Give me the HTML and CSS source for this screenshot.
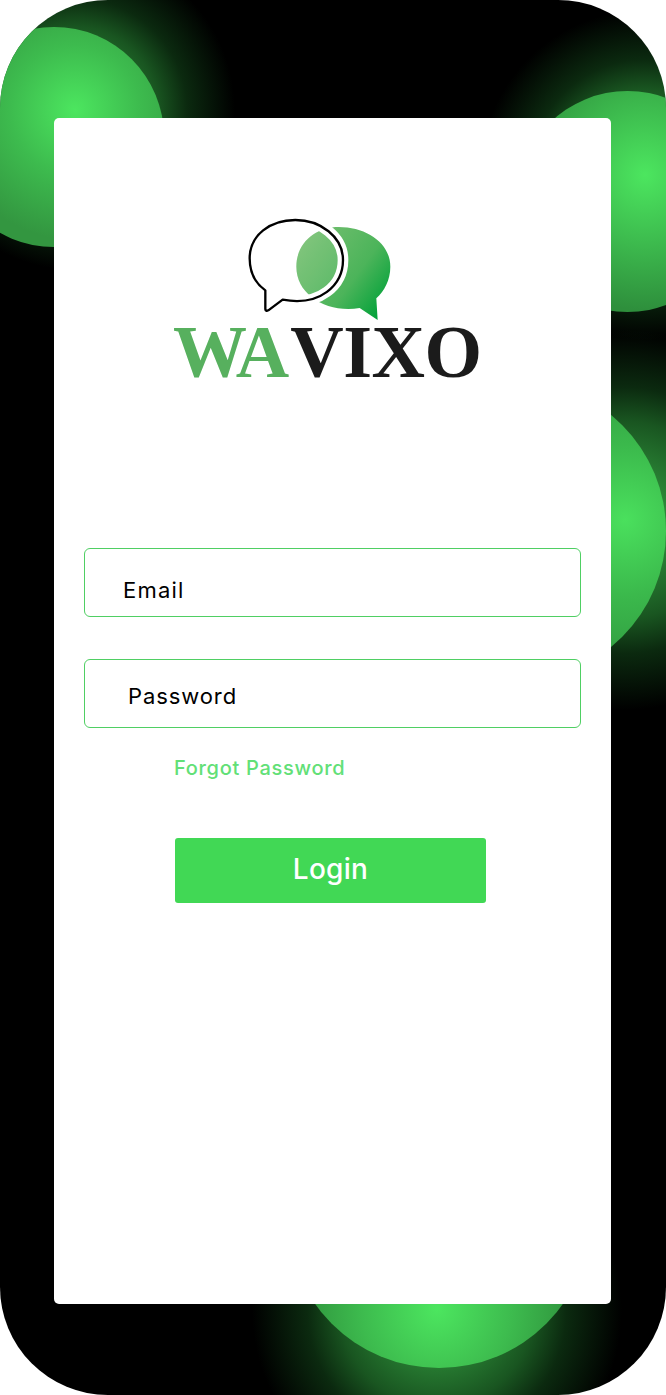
FILE: index.html
```html
<!DOCTYPE html>
<html lang="en">
<head>
<meta charset="utf-8">
<title>Wavixo Login</title>
<link rel="stylesheet" href="styles.css">
</head>
<body>
<main class="frame">
  <div class="orb orb-tl"></div>
  <div class="orb orb-tr"></div>
  <div class="orb orb-mr"></div>
  <div class="orb orb-b"></div>
  <section class="card">
    <svg class="logo-mark" viewBox="260 36 440 312" aria-hidden="true">
      <defs>
        <linearGradient id="bubble" x1="0.05" y1="0.2" x2="0.95" y2="0.85">
          <stop offset="0" stop-color="#74bf70"/>
          <stop offset="0.6" stop-color="#4cb45a"/>
          <stop offset="1" stop-color="#03a23a"/>
        </linearGradient>
        <clipPath id="inner">
          <path d="M367 284C480 305 548 240 548 165C548 95 480 45 405 45C330 45 268 90 268 160C268 200 285 235 315 256V312Q316 320 324 316Z"/>
        </clipPath>
      </defs>
      <path fill="url(#bubble)" d="M598 309C500 325 408 270 408 185C408 110 470 66 535 66C620 66 690 115 690 185C690 225 672 258 648 280L652 345Z"/>
      <path clip-path="url(#inner)" fill="#fff" fill-opacity="0.08" d="M598 309C500 325 408 270 408 185C408 110 470 66 535 66C620 66 690 115 690 185C690 225 672 258 648 280L652 345Z"/>
      <path fill="none" stroke="#fff" stroke-width="32" d="M367 284C480 305 548 240 548 165C548 95 480 45 405 45"/>
      <path fill="none" stroke="#000" stroke-width="7" stroke-linejoin="round" d="M367 284C480 305 548 240 548 165C548 95 480 45 405 45C330 45 268 90 268 160C268 200 285 235 315 256V312Q316 320 324 316Z"/>
    </svg>
    <h1 class="wordmark"><span class="wordmark-wa">WA</span><span class="wordmark-vixo">VIXO</span></h1>
    <form class="form">
      <input class="field field-email" type="text" placeholder="Email">
      <input class="field field-password" type="password" placeholder="Password">
      <a class="forgot" href="#">Forgot Password</a>
      <button class="login" type="button">Login</button>
    </form>
  </section>
</main>
</body>
</html>
```

FILE: styles.css
```css
* {
  box-sizing: border-box;
}

html,
body {
  margin: 0;
  background: #fff;
}

.frame {
  position: relative;
  width: 666px;
  height: 1395px;
  padding: 118px 55px 91px 54px;
  overflow: hidden;
  border-radius: 108px;
  background-color: #000;
  background-image:
    radial-gradient(circle 160px at 75px 110px, rgba(76, 230, 95, 0.75) 0, rgba(50, 170, 65, 0.5) 52%, rgba(40, 150, 55, 0.28) 70%, transparent 100%),
    radial-gradient(circle 165px at 645px 175px, rgba(76, 230, 95, 0.75) 0, rgba(50, 170, 65, 0.5) 52%, rgba(40, 150, 55, 0.28) 70%, transparent 100%),
    radial-gradient(circle 190px at 625px 520px, rgba(76, 230, 95, 0.75) 0, rgba(50, 170, 65, 0.5) 52%, rgba(40, 150, 55, 0.28) 70%, transparent 100%),
    radial-gradient(circle 185px at 437px 1310px, rgba(76, 230, 95, 0.75) 0, rgba(50, 170, 65, 0.5) 52%, rgba(40, 150, 55, 0.28) 70%, transparent 100%);
}

.orb {
  position: absolute;
  border-radius: 50%;
}

.orb-tl {
  left: -56px;
  top: 27px;
  width: 220px;
  height: 220px;
  background: radial-gradient(circle 130px at 131px 83px, #4ce65f 0, #3dbb4e 50%, #339640 100%);
}

.orb-tr {
  left: 517px;
  top: 91px;
  width: 221px;
  height: 221px;
  background: radial-gradient(circle 135px at 128px 84px, #4ce65f 0, #3dbb4e 50%, #2e8f3c 100%);
}

.orb-mr {
  left: 366px;
  top: 381px;
  width: 300px;
  height: 300px;
  background: radial-gradient(circle 150px at 259px 139px, #4ae05d 0, #3bb94c 50%, #309a40 100%);
}

.orb-b {
  left: 287px;
  top: 1064px;
  width: 304px;
  height: 304px;
  background: radial-gradient(circle 150px at 150px 245px, #4ce65f 0, #3dbb4e 50%, #2c8a39 100%);
}

.card {
  position: relative;
  display: flex;
  flex-direction: column;
  height: 1186px;
  padding: 99px 30px 0;
  border-radius: 5px;
  background: #fff;
}

.logo-mark {
  display: block;
  width: 146.67px;
  height: 104px;
  margin-left: 163px;
}

.wordmark {
  margin: 1px 0 0 89px;
  font-family: "Liberation Serif", serif;
  font-size: 74px;
  font-weight: 700;
  line-height: 60px;
  white-space: nowrap;
}

.wordmark-wa {
  color: #57b05e;
  letter-spacing: -3px;
}

.wordmark-vixo {
  color: #1b1b1b;
  margin-left: 4px;
  letter-spacing: -0.5px;
}

.form {
  display: flex;
  flex-direction: column;
  align-items: flex-start;
  margin-top: 166px;
}

.field {
  display: block;
  width: 497px;
  height: 69px;
  border: 1px solid #4fcf63;
  border-radius: 6px;
  background: #fff;
  font-family: Inter, sans-serif;
  font-size: 22px;
  letter-spacing: 0.9px;
  outline: none;
}

.field::placeholder {
  color: #000;
  opacity: 1;
}

.field-email {
  padding: 14px 0 0 38px;
  letter-spacing: 1.2px;
}

.field-password {
  margin-top: 42px;
  padding: 4px 0 0 43px;
}

.forgot {
  margin: 26px 0 0 90px;
  color: #62e077;
  font-family: Inter, sans-serif;
  font-size: 20px;
  font-weight: 500;
  letter-spacing: 0.7px;
  line-height: 28px;
  text-decoration: none;
}

.login {
  width: 311px;
  height: 65px;
  margin: 56px 0 0 91px;
  padding: 0 0 4px;
  border: 0;
  border-radius: 3px;
  background: #41d855;
  color: #fff;
  font-family: Inter, sans-serif;
  font-size: 28px;
  font-weight: 500;
  letter-spacing: 0.3px;
}
```
